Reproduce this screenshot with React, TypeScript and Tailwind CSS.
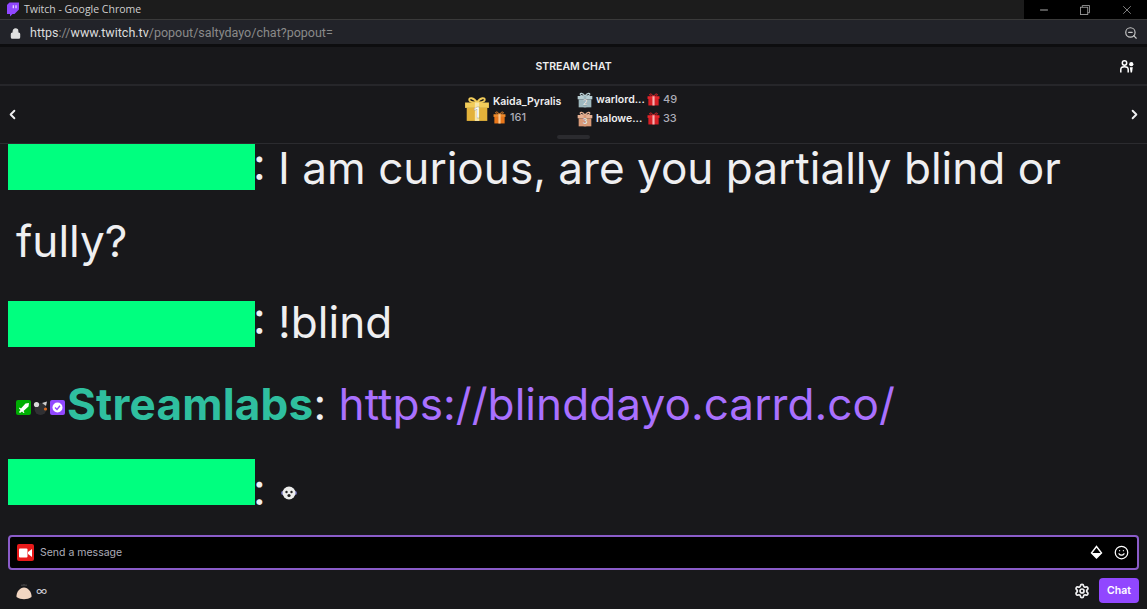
import React from "react";
import { ChevronLeft, ChevronRight, Lock, Minus, Settings, Smile, X, ZoomOut } from "lucide-react";

const Gift = ({ size, body, lid, ribbon, n, nsize }: { size: number; body: string; lid: string; ribbon: string; n?: string; nsize?: number }) => (
  <svg width={size} height={size} viewBox="0 0 24 24" className="shrink-0">
    <path d="M12 6 C9 1 4 1 5 4 C6 6 10 6 12 6 C14 6 18 6 19 4 C20 1 15 1 12 6Z" fill="none" stroke={lid} strokeWidth="1.8" />
    <rect x="1" y="6" width="22" height="5" fill={lid} />
    <rect x="2.5" y="11" width="19" height="12" fill={body} />
    <rect x="10" y="6" width="4" height="17" fill={ribbon} />
    {n && (
      <text x="12" y="20" textAnchor="middle" fontSize={nsize ?? 13} fontWeight="700" fill="#fff" stroke="#0006" strokeWidth="0.4" fontFamily="Inter, sans-serif">
        {n}
      </text>
    )}
  </svg>
);

const Censor = ({ className }: { className: string }) => (
  <span className={"inline-block -ml-2 -mr-[2px] w-[247px] h-[46px] bg-[#00ff7f] align-middle " + className} />
);

const Stat = ({ name, count, n, body, lid }: { name: string; count: string; n: string; body: string; lid: string }) => (
  <div className="flex items-center h-[18px]">
    <Gift size={16} body={body} lid={lid} ribbon={body} n={n} nsize={11} />
    <span className="ml-[3px] w-[51px] text-[10.5px] font-semibold text-[#efeff1] whitespace-nowrap">{name}</span>
    <Gift size={13} body="#d81f26" lid="#e8232a" ribbon="#f4b0b0" />
    <span className="ml-[3px] text-[11px] font-medium text-[#adadb8]">{count}</span>
  </div>
);

export default function App() {
  return (
    <div className="w-[1147px] h-[609px] flex flex-col overflow-hidden bg-[#18181b] text-[#efeff1] font-['Inter',sans-serif]">
      {/* window title bar */}
      <div className="h-[19px] flex items-center bg-[#1c1c1c] shrink-0">
        <svg width="14" height="15" viewBox="0 0 24 24" className="ml-[6px]">
          <path d="M6 0L1.714 4.286v15.428h5.143V24l4.286-4.286h3.428L22.286 12V0z" fill="#9147ff" />
          <path d="M11.571 4.714h1.715v5.143H11.57zm4.715 0H18v5.143h-1.714z" fill="#fff" />
        </svg>
        <span className="ml-[4px] text-[10.5px] text-[#cfcfcf] font-['Open_Sans',sans-serif]">Twitch - Google Chrome</span>
        <div className="ml-auto h-full flex bg-black gap-px">
          <div className="w-[40px] flex items-center justify-center"><Minus size={12} className="text-[#aaa]" /></div>
          <div className="w-[40px] flex items-center justify-center">
            <svg width="10" height="10" viewBox="0 0 11 11" fill="none" stroke="#999"><rect x="0.5" y="2.5" width="8" height="8" /><path d="M2.5 2.5V0.5H10.5V8.5H8.5" /></svg>
          </div>
          <div className="w-[41px] flex items-center justify-center"><X size={14} strokeWidth={1} className="text-[#ddd]" /></div>
        </div>
      </div>
      {/* address bar */}
      <div className="h-[28px] flex items-center shrink-0 bg-[#222329] border-t border-[#3a3a3a] border-b-[3px] border-b-[#0d0d0f] pt-[2px]">
        <Lock size={11} strokeWidth={2.6} className="ml-[10px] text-[#e2e2e2]" fill="#e2e2e2" />
        <span className="ml-[9px] text-[12.5px] font-['Roboto',sans-serif] text-[#dcdcdc]">
          https<span className="text-[#8a8a8a]">://</span>www.twitch.tv<span className="text-[#8a8a8a]">/popout/saltydayo/chat?popout=</span>
        </span>
        <ZoomOut size={14} className="ml-auto mr-[9px] text-[#c8c8c8]" />
      </div>
      {/* chat header */}
      <div className="h-[39px] shrink-0 flex items-center border-b-2 border-[#26262a] relative pt-[2px]">
        <div className="flex-1 text-center text-[10.5px] font-semibold">STREAM CHAT</div>
        <svg width="14" height="13" viewBox="0 0 14 13" className="absolute right-[13px] top-[13px]">
          <circle cx="4.5" cy="3" r="2.2" fill="none" stroke="#fff" strokeWidth="1.5" />
          <path d="M0.8 12.5 V9.5 C0.8 7.5 2.5 6.8 4.5 6.8 C6.5 6.8 8.2 7.5 8.2 9.5 V12.5" fill="none" stroke="#fff" strokeWidth="1.5" />
          <circle cx="11.3" cy="4.2" r="2.1" fill="#fff" />
          <path d="M9.8 7.2 H12.8 L12 12.5 H10.6Z" fill="#fff" />
        </svg>
      </div>
      {/* leaderboard */}
      <div className="h-[58px] shrink-0 flex items-center border-b border-[#2b2b2f] relative pl-[5px] pr-[5px]">
        <ChevronLeft size={15} strokeWidth={3} />
        <div className="flex-1 flex justify-center items-center pb-[11px] pr-[6px]">
          <Gift size={26} body="#e3b23a" lid="#f2cc5a" ribbon="#f7e7a8" n="1" nsize={13} />
          <div className="ml-[3px] w-[84px] flex flex-col">
            <span className="text-[10.5px] font-semibold leading-[16px]">Kaida_Pyralis</span>
            <span className="flex items-center text-[11px] font-medium text-[#adadb8] leading-[14px]">
              <Gift size={13} body="#e8761a" lid="#f08a2a" ribbon="#f9c690" />
              <span className="ml-[4px]">161</span>
            </span>
          </div>
          <div className="flex flex-col gap-[1px]">
            <Stat name="warlord..." count="49" n="2" body="#9fb9bf" lid="#b7cdd2" />
            <Stat name="halowe..." count="33" n="3" body="#d99a78" lid="#e6b193" />
          </div>
        </div>
        <ChevronRight size={15} strokeWidth={3} />
        <span className="absolute left-[557px] bottom-[4px] w-[33px] h-[4px] rounded-[2px] bg-[#2b2b2f]" />
      </div>
      {/* chat log */}
      <div className="flex-1 min-h-0">
        <div className="-mt-[12px] pl-4 text-[44.1px] leading-[73px]">
          <div className="pb-[8px]"><Censor className="-translate-y-[5px]" />: I am curious, are you partially blind or fully?</div>
          <div className="pb-[9px]"><Censor className="-translate-y-[2px]" />: !blind</div>
          <div className="flex items-center h-[73px]">
            <span className="w-[15px] h-[15px] mt-[6px] rounded-[2px] bg-[#00ad03] flex items-center justify-center">
              <svg width="12" height="12" viewBox="0 0 12 12"><path d="M11 1 L7.5 1.5 L3 6.5 L1.5 5.5 L1 6.5 L2.5 8 L1 10 L2 11 L4 9.5 L5.5 11 L6.5 10.5 L5.5 9 L10.5 4.5Z" fill="#fff" /></svg>
            </span>
            <svg width="18" height="15" viewBox="0 0 18 15" className="mx-[0.5px] mt-[6px]">
              <circle cx="8.5" cy="9" r="6" fill="#303033" />
              <circle cx="4.5" cy="4.5" r="2.6" fill="#d8d8d8" />
              <path d="M10 3 L15 1.5 L14 6Z" fill="#cfcfcf" />
              <circle cx="13.5" cy="9" r="1.6" fill="#d8691f" />
            </svg>
            <span className="w-[15px] h-[15px] mt-[6px] rounded-[2px] bg-[#9147ff] flex items-center justify-center">
              <svg width="11" height="11" viewBox="0 0 11 11" fill="#fff"><circle cx="5.5" cy="5.5" r="5" /><path d="M3 5.5 L5 7.5 L8 3.8" fill="none" stroke="#9147ff" strokeWidth="1.4" /></svg>
            </span>
            <span className="ml-[2px] font-bold text-[#2fbf9f] tracking-[0.2px]">Streamlabs</span>
            <span>:&nbsp;</span>
            <span className="text-[#a970ff] tracking-[0.05px]">https://blinddayo.carrd.co/</span>
          </div>
          <div className="flex items-center h-[72px] mt-[5px]">
            <Censor className="" />
            <span className="relative top-[7px]">:</span>
            <svg width="18" height="18" viewBox="0 0 18 18" className="ml-[14px] mt-[22px]">
              <circle cx="3" cy="9" r="2" fill="#6a6ab0" />
              <circle cx="15" cy="9" r="2" fill="#6a6ab0" />
              <circle cx="9" cy="9" r="6.5" fill="#ececec" />
              <circle cx="6.5" cy="8" r="1.2" fill="#222" />
              <circle cx="11.5" cy="8" r="1.2" fill="#222" />
              <circle cx="9" cy="11.5" r="1.6" fill="#222" />
            </svg>
          </div>
        </div>
      </div>
      {/* input */}
      <div className="shrink-0 px-[8px]">
        <div className="h-[35px] flex items-center bg-black border-2 border-[#8a5cc9] rounded-[4px] pl-[7px] pr-[8px]">
          <span className="w-[17px] h-[17px] rounded-[2px] bg-[#e81a1a] flex items-center justify-center">
            <svg width="13" height="10" viewBox="0 0 13 10" fill="#fff"><rect x="0" y="0.5" width="8.5" height="9" rx="1" /><path d="M9 4 L13 1 V9 L9 6Z" /></svg>
          </span>
          <span className="ml-[6px] text-[10.5px] text-[#adadb8]">Send a message</span>
          <svg width="13" height="15" viewBox="0 0 13 15" className="ml-auto" fill="#fff">
            <path d="M6.5 1.5 L11.5 8 L6.5 13 L1.5 8Z" fill="none" stroke="#fff" strokeWidth="1.4" />
            <path d="M1.5 8 H11.5 L6.5 13Z" />
          </svg>
          <Smile size={15} className="ml-[11px] text-white" />
        </div>
        <div className="h-[39px] flex items-center pl-[7px] pt-[2px]">
          <svg width="18" height="18" viewBox="0 0 18 18" className="mt-[2px]">
            <path d="M1.5 14 C1 9 5 4.5 9 4.5 C13 4.5 17 9 16.5 14 C12 17 6 17 1.5 14Z" fill="#f2d6c2" />
            <path d="M7 3 V1.5 M9 3 V1 M11 3 V1.5" stroke="#777" strokeWidth="0.7" />
          </svg>
          <span className="ml-[3px] text-[12px] leading-none text-[#c8c8d0]">∞</span>
          <Settings size={16} strokeWidth={2.6} className="ml-auto" />
          <button className="ml-[9px] w-[40px] h-[25px] rounded-[4px] bg-[#9147ff] text-[10.5px] font-semibold text-white">Chat</button>
        </div>
      </div>
    </div>
  );
}
